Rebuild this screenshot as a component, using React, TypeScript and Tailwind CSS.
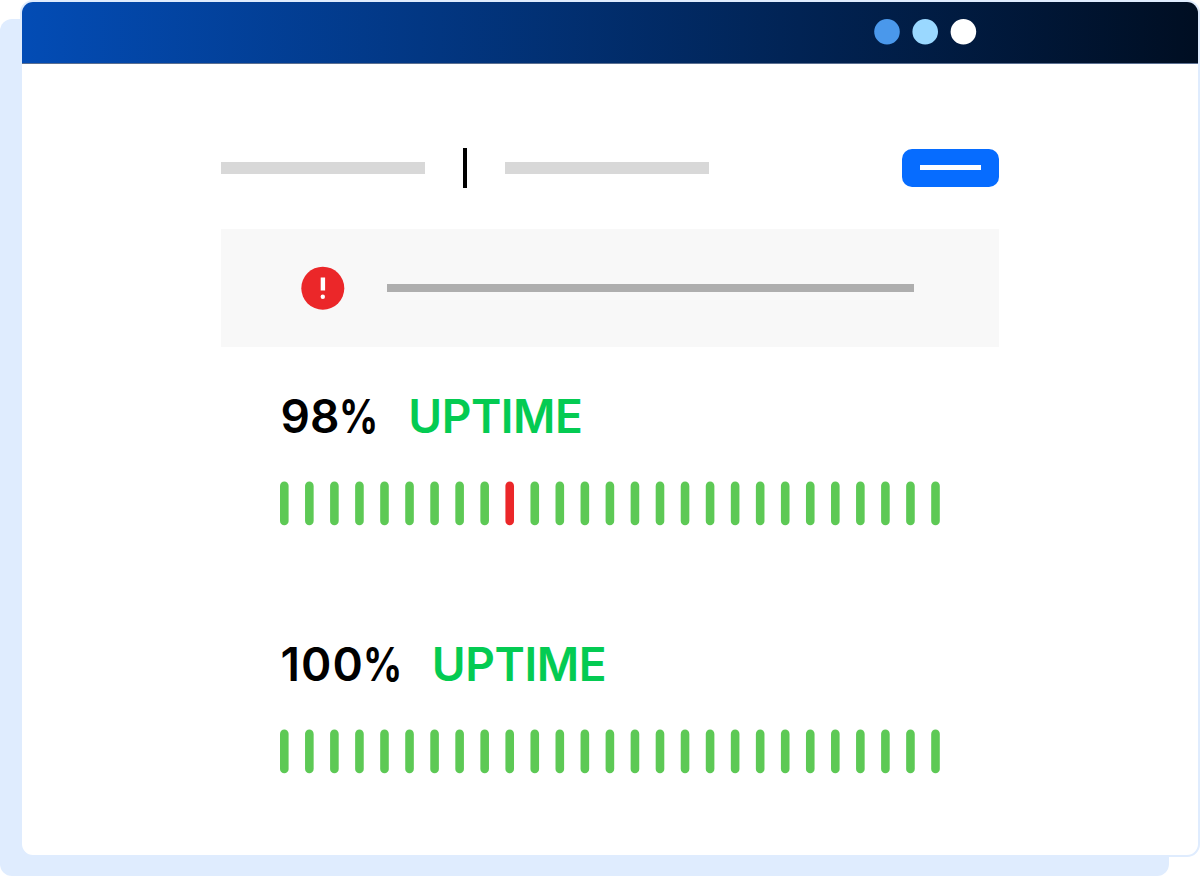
const BAR_COUNT = 27;
const BAR_PITCH = 25.046;

function UptimeBars({ downIndex }: { downIndex?: number }) {
  return (
    <svg width="662" height="46" viewBox="0 0 662 46" className="block">
      {Array.from({ length: BAR_COUNT }, (_, i) => (
        <rect
          key={i}
          x={1 + i * BAR_PITCH}
          y="1.6"
          width="8.6"
          height="43.7"
          rx="4.3"
          fill={i === downIndex ? "#EB2729" : "#5DC955"}
        />
      ))}
    </svg>
  );
}

function UptimeSection({
  value,
  digitsClass,
  downIndex,
}: {
  value: number;
  digitsClass: string;
  downIndex?: number;
}) {
  return (
    <section className="h-[248px] pl-[58px]">
      <h2 className="flex h-[56px] items-center pl-[1.5px] text-[46px] font-semibold leading-[56px] whitespace-nowrap">
        <span className={`text-black ${digitsClass}`}>{value}</span>
        <span className="-mr-[6.5px] origin-left scale-x-[0.84] font-bold text-black">%</span>
        <span className="ml-[28.7px] tracking-[-0.45px] text-[#04CB52]">UPTIME</span>
      </h2>
      <div className="pt-[36px]">
        <UptimeBars downIndex={downIndex} />
      </div>
    </section>
  );
}

function AlertIcon() {
  return (
    <svg width="44" height="44" viewBox="0 0 44 44" className="block shrink-0">
      <circle cx="21.8" cy="22.2" r="21.5" fill="#EB2729" />
      <rect x="19.7" y="11.5" width="4.4" height="13" fill="#fff" />
      <circle cx="21.8" cy="30.8" r="2.2" fill="#fff" />
    </svg>
  );
}

export default function App() {
  return (
    <div className="grid h-[876px] w-[1200px] grid-cols-1 grid-rows-1 overflow-hidden bg-white font-['Inter',sans-serif]">
      <div className="col-start-1 row-start-1 mt-[19px] h-[857px] w-[1169px] rounded-[12px] bg-[#DFECFE]" />
      <div className="col-start-1 row-start-1 ml-[20px] flex h-[857px] w-[1180px] flex-col overflow-hidden rounded-[13px] border-2 border-[#DFECFE] bg-white">
        <header className="flex h-[62px] shrink-0 border-b border-[#5B6F90] bg-linear-to-r/srgb from-[#034CB5] to-[#000E22]">
          <svg width="104" height="61" viewBox="0 0 104 61" className="ml-[852px] block">
            <circle cx="13" cy="29.7" r="12.8" fill="#4A98EB" />
            <circle cx="51.2" cy="29.7" r="12.8" fill="#9AD8FF" />
            <circle cx="89.4" cy="29.7" r="12.8" fill="#fff" />
          </svg>
        </header>
        <main className="px-[199px] pt-[84px]">
          <div className="flex h-[40px] items-center">
            <div className="h-[12px] w-[204px] bg-[#D8D8D8]" />
            <div className="ml-[38px] h-[40px] w-[4px] bg-black" />
            <div className="ml-[38px] h-[12px] w-[204px] bg-[#D8D8D8]" />
            <div className="ml-auto flex h-[38px] w-[97.4px] justify-center rounded-[10px] bg-[#066CFF] pt-[16px]">
              <div className="h-[5px] w-[61px] bg-white" />
            </div>
          </div>
          <div className="mt-[41px] flex h-[118px] items-center bg-[#F8F8F8] pl-[80px]">
            <AlertIcon />
            <div className="ml-[42px] h-[8px] w-[527px] bg-[#AEAEAE]" />
          </div>
          <div className="pt-[41px]">
            <UptimeSection value={98} digitsClass="tracking-[0px]" downIndex={9} />
            <UptimeSection value={100} digitsClass="tracking-[1.1px] -mr-[1px]" />
          </div>
        </main>
      </div>
    </div>
  );
}
